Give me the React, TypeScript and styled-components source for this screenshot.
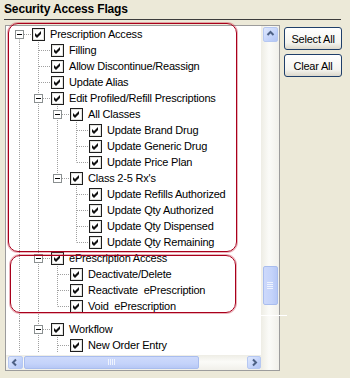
import styled, {createGlobalStyle} from 'styled-components';

const GlobalStyle = createGlobalStyle`
  html, body {
    margin: 0;
    padding: 0;
  }
  body {
    background: #ece9d8;
    font-family: "Liberation Sans", Arial, sans-serif;
  }
`;

type Guide = 'none' | 'pass' | 'tee' | 'elbow' | 'root';

interface IRow {
  label: string;
  guides: Guide[];
  expander?: boolean;
  gapBefore?: number;
}

const ROWS: IRow[] = [
  {label: 'Prescription Access', guides: ['root'], expander: true},
  {label: 'Filling', guides: ['pass', 'tee']},
  {label: 'Allow Discontinue/Reassign', guides: ['pass', 'tee']},
  {label: 'Update Alias', guides: ['pass', 'tee']},
  {label: 'Edit Profiled/Refill Prescriptions', guides: ['pass', 'tee'], expander: true},
  {label: 'All Classes', guides: ['pass', 'pass', 'tee'], expander: true},
  {label: 'Update Brand Drug', guides: ['pass', 'pass', 'pass', 'tee']},
  {label: 'Update Generic Drug', guides: ['pass', 'pass', 'pass', 'tee']},
  {label: 'Update Price Plan', guides: ['pass', 'pass', 'pass', 'elbow']},
  {label: "Class 2-5 Rx's", guides: ['pass', 'pass', 'elbow'], expander: true},
  {label: 'Update Refills Authorized', guides: ['pass', 'pass', 'none', 'tee']},
  {label: 'Update Qty Authorized', guides: ['pass', 'pass', 'none', 'tee']},
  {label: 'Update Qty Dispensed', guides: ['pass', 'pass', 'none', 'tee']},
  {label: 'Update Qty Remaining', guides: ['pass', 'pass', 'none', 'elbow']},
  {label: 'ePrescription Access', guides: ['pass', 'tee'], expander: true},
  {label: 'Deactivate/Delete', guides: ['pass', 'pass', 'tee']},
  {label: 'Reactivate\u00a0 ePrescription', guides: ['pass', 'pass', 'tee']},
  {label: 'Void\u00a0 ePrescription', guides: ['pass', 'pass', 'elbow']},
  {label: 'Workflow', guides: ['pass', 'tee'], expander: true, gapBefore: 7},
  {label: 'New Order Entry', guides: ['pass', 'pass', 'tee']},
];

const Page = styled.div`
  position: relative;
  width: 350px;
  height: 378px;
  overflow: hidden;
  background: #ece9d8;
  color: #000;
`;

const Header = styled.div`
  width: 337px;
  height: 19px;
  margin-left: 4px;
  border-bottom: 1px solid #3c3c3c;
  font-size: 12px;
  font-weight: bold;
  line-height: 18px;
  letter-spacing: -0.15px;
`;

const Main = styled.div`
  display: flex;
  align-items: flex-start;
  gap: 4px;
  padding: 5px 0 0 5px;
`;

const TreeBox = styled.div`
  box-sizing: border-box;
  width: 275px;
  height: 346px;
  display: flex;
  border: 1px solid #9c9c9c;
  background: #fff;
`;

const TreeColumn = styled.div`
  flex: 1;
  display: flex;
  flex-direction: column;
  min-width: 0;
`;

const Viewport = styled.div`
  flex: 1;
  overflow: hidden;
  padding-left: 4px;
`;

const Row = styled.div`
  display: flex;
  align-items: center;
  height: 16px;
  font-size: 11px;
  white-space: pre;
  letter-spacing: -0.2px;
`;

const GapRow = styled.div<{$h: number}>`
  display: flex;
  height: ${p => p.$h}px;
`;

const Label = styled.span`
  margin-left: 5px;
  line-height: 16px;
`;

const VScroll = styled.div`
  width: 18px;
  display: flex;
  flex-direction: column;
  align-items: flex-end;
  padding-right: 1px;
  box-sizing: border-box;
  background: linear-gradient(to right, #eeede5, #fbfbf8 45%, #f1f0ea);
`;

const HScroll = styled.div`
  height: 15px;
  display: flex;
  align-items: center;
  padding-left: 2px;
  background: linear-gradient(#eeede5, #fbfbf8 45%, #f1f0ea);
`;

const ArrowButton = styled.div<{$w: number; $h: number}>`
  box-sizing: border-box;
  width: ${p => p.$w}px;
  height: ${p => p.$h}px;
  display: flex;
  align-items: center;
  justify-content: center;
  border: 1px solid #b6c8f2;
  border-radius: 2px;
  background: linear-gradient(135deg, #dfe8fd, #c3d3fa 60%, #b2c5f4);
`;

const Thumb = styled.div<{$vertical?: boolean}>`
  box-sizing: border-box;
  display: flex;
  align-items: center;
  justify-content: center;
  border: 1px solid #a9bdee;
  border-radius: 2px;
  background: ${p =>
    p.$vertical
      ? 'linear-gradient(to right, #cdd9fb, #c4d3fa 60%, #b7c8f5)'
      : 'linear-gradient(#cdd9fb, #c4d3fa 60%, #b7c8f5)'};
`;

const VThumb = styled(Thumb)`
  width: 15px;
  height: 39px;
  margin-top: 224px;
`;

const HThumb = styled(Thumb)`
  width: 175px;
  height: 13px;
  margin-left: 1px;
`;

const HTrackGap = styled.div`
  flex: 1;
`;

const ButtonColumn = styled.div`
  display: flex;
  flex-direction: column;
  gap: 4px;
  margin-top: 2px;
`;

const XpButton = styled.button`
  box-sizing: border-box;
  width: 58px;
  height: 23px;
  padding: 0;
  border: 1px solid #1f3f6a;
  border-radius: 3px;
  background: linear-gradient(#ffffff, #f4f4ef 70%, #dcd8cc);
  font-family: "Liberation Sans", Arial, sans-serif;
  font-size: 11px;
  letter-spacing: -0.2px;
  color: #000;
`;

const Callout = styled.div<{$x: number; $y: number; $w: number; $h: number}>`
  position: absolute;
  left: ${p => p.$x}px;
  top: ${p => p.$y}px;
  width: ${p => p.$w}px;
  height: ${p => p.$h}px;
  box-sizing: border-box;
  border: 1px solid #a8001c;
  border-radius: 10px;
  box-shadow: 0 0 0 1px rgba(200, 40, 60, 0.35);
  pointer-events: none;
`;

const Glitch = styled.div`
  position: absolute;
  left: 259px;
  top: 315px;
  width: 28px;
  height: 1px;
  background: #fff;
`;

const DOT = '#a0a0a0';

function GuideCell({kind, width, height, expander}: {kind: Guide; width: number; height: number; expander?: boolean}) {
  const mid = 8.5;
  const x = 9.5;
  let top: number | null = null;
  let bottom: number | null = null;
  if (kind === 'pass' || kind === 'tee') {
    top = 0;
    bottom = height;
  } else if (kind === 'elbow') {
    top = 0;
    bottom = mid;
  } else if (kind === 'root') {
    top = mid;
    bottom = height;
  }
  const connector = kind === 'tee' || kind === 'elbow' || kind === 'root';
  return (
    <svg width={width} height={height} style={{display: 'block', flex: 'none'}}>
      {top !== null && bottom !== null && (
        <line x1={x} y1={top} x2={x} y2={bottom} stroke={DOT} strokeDasharray="1 1" />
      )}
      {connector && (
        <line x1={expander ? 14 : 10} y1={mid} x2={width} y2={mid} stroke={DOT} strokeDasharray="1 1" />
      )}
      {expander && (
        <g>
          <rect x={5.5} y={4.5} width={8} height={8} fill="#fff" stroke="#8a8f90" />
          <line x1={7} y1={mid} x2={12} y2={mid} stroke="#000" />
        </g>
      )}
    </svg>
  );
}

function CheckBox() {
  return (
    <svg width={13} height={13} style={{display: 'block', flex: 'none'}}>
      <rect x={0.5} y={0.5} width={12} height={12} fill="#fff" stroke="#1e1e1e" />
      <rect x={1.5} y={1.5} width={10} height={10} fill="none" stroke="#e4e4e0" />
      <polygon points="3,5 5,7 9,3 9,6 5,10 3,8" fill="#111" />
    </svg>
  );
}

function ArrowGlyph({dir}: {dir: 'up' | 'left' | 'right'}) {
  const d = {
    up: 'M1.5 5 L4.5 2 L7.5 5',
    left: 'M5 1.5 L2 4.5 L5 7.5',
    right: 'M3 1.5 L6 4.5 L3 7.5',
  }[dir];
  return (
    <svg width={9} height={9}>
      <path d={d} fill="none" stroke="#4d6185" strokeWidth={2} />
    </svg>
  );
}

function Grip({vertical}: {vertical?: boolean}) {
  return vertical ? (
    <svg width={7} height={8}>
      {[0, 2, 4, 6].map(y => (
        <line key={y} x1={0} y1={y + 0.5} x2={6} y2={y + 0.5} stroke="#eef3fe" />
      ))}
    </svg>
  ) : (
    <svg width={8} height={7}>
      {[0, 2, 4, 6].map(x => (
        <line key={x} x1={x + 0.5} y1={0} x2={x + 0.5} y2={6} stroke="#eef3fe" />
      ))}
    </svg>
  );
}

function TreeRow({row}: {row: IRow}) {
  const last = row.guides.length - 1;
  return (
    <>
      {row.gapBefore ? (
        <GapRow $h={row.gapBefore}>
          {row.guides.map((g, i) => (
            <GuideCell
              key={i}
              kind={g === 'none' ? 'none' : 'pass'}
              width={i === last ? 22 : 19}
              height={row.gapBefore as number}
            />
          ))}
        </GapRow>
      ) : null}
      <Row>
        {row.guides.map((g, i) => (
          <GuideCell
            key={i}
            kind={g}
            width={i === last ? 22 : 19}
            height={16}
            expander={i === last && row.expander}
          />
        ))}
        <CheckBox />
        <Label>{row.label}</Label>
      </Row>
    </>
  );
}

export default function App() {
  return (
    <Page>
      <GlobalStyle />
      <Header>Security Access Flags</Header>
      <Main>
        <TreeBox>
          <TreeColumn>
            <Viewport>
              {ROWS.map(r => (
                <TreeRow key={r.label} row={r} />
              ))}
            </Viewport>
            <HScroll>
              <ArrowButton $w={15} $h={13}>
                <ArrowGlyph dir="left" />
              </ArrowButton>
              <HThumb>
                <Grip />
              </HThumb>
              <HTrackGap />
              <ArrowButton $w={14} $h={13}>
                <ArrowGlyph dir="right" />
              </ArrowButton>
            </HScroll>
          </TreeColumn>
          <VScroll>
            <ArrowButton $w={15} $h={15} style={{marginTop: 1}}>
              <ArrowGlyph dir="up" />
            </ArrowButton>
            <VThumb $vertical>
              <Grip vertical />
            </VThumb>
          </VScroll>
        </TreeBox>
        <ButtonColumn>
          <XpButton type="button">Select All</XpButton>
          <XpButton type="button">Clear All</XpButton>
        </ButtonColumn>
      </Main>
      <Callout $x={8} $y={23} $w={229} $h={229} />
      <Callout $x={10} $y={255} $w={226} $h={58} />
      <Glitch />
    </Page>
  );
}
